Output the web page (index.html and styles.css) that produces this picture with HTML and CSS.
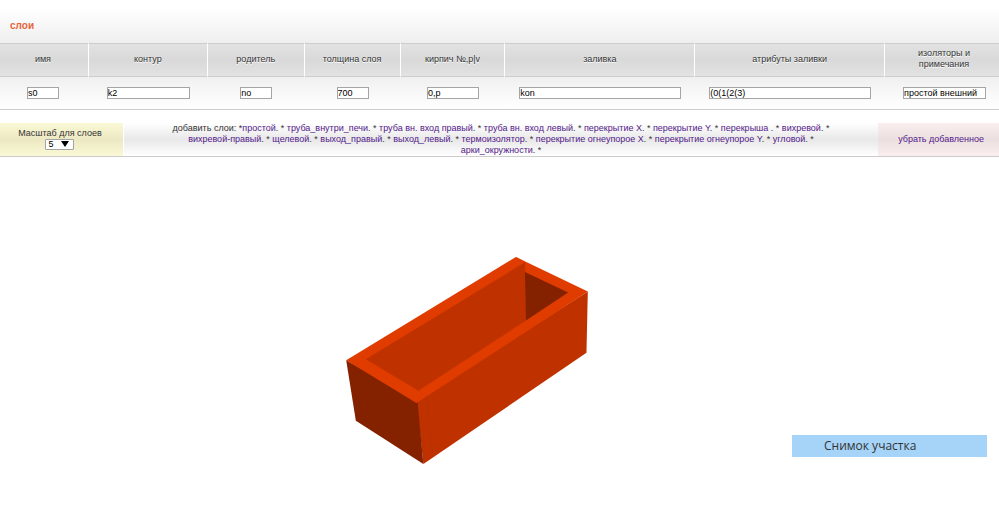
FILE: index.html
```html
<!DOCTYPE html>
<html lang="ru">
<head>
  <meta charset="UTF-8">
  <meta name="viewport" content="width=device-width, initial-scale=1.0">
  <title>слои</title>
  <link rel="stylesheet" href="styles.css">
</head>
<body>
  <h1 class="title">слои</h1>

  <!-- layer parameters -->
  <table class="layers">
    <colgroup>
      <col class="col-name">
      <col class="col-contour">
      <col class="col-parent">
      <col class="col-thick">
      <col class="col-brick">
      <col class="col-fill">
      <col class="col-fill">
      <col>
    </colgroup>
    <thead>
      <tr>
        <th id="h-name">имя</th>
        <th id="h-contour">контур</th>
        <th id="h-parent">родитель</th>
        <th id="h-thick">толщина слоя</th>
        <th id="h-brick">кирпич №,p|v</th>
        <th id="h-fill">заливка</th>
        <th id="h-attr">атрибуты заливки</th>
        <th id="h-notes">изоляторы и примечания</th>
      </tr>
    </thead>
    <tbody>
      <tr>
        <td><input type="text" class="w-small" aria-labelledby="h-name" value="s0"></td>
        <td><input type="text" class="w-medium" aria-labelledby="h-contour" value="k2"></td>
        <td><input type="text" class="w-small" aria-labelledby="h-parent" value="no"></td>
        <td><input type="text" class="w-small" aria-labelledby="h-thick" value="700"></td>
        <td><input type="text" class="w-brick" aria-labelledby="h-brick" value="0,p"></td>
        <td><input type="text" class="w-large" aria-labelledby="h-fill" value="kon"></td>
        <td><input type="text" class="w-large" aria-labelledby="h-attr" value="(0(1(2(3)"></td>
        <td><input type="text" class="w-medium" aria-labelledby="h-notes" value="простой внешний"></td>
      </tr>
    </tbody>
  </table>

  <div class="tools">
    <div class="scale">
      <label for="scale">Масштаб для слоев</label>
      <span class="select-box">
        <select id="scale">
          <option>1</option>
          <option selected>5</option>
          <option>10</option>
        </select>
      </span>
    </div>
    <div class="add">
      добавить слои: *<a href="#">простой</a>. *
      <a href="#">труба_внутри_печи</a>. *
      <a href="#">труба вн. вход правый</a>. *
      <a href="#">труба вн. вход левый</a>. *
      <a href="#">перекрытие X</a>. *
      <a href="#">перекрытие Y</a>. *
      <a href="#">перекрыша </a>. *
      <a href="#">вихревой</a>. *
      <a href="#">вихревой-правый</a>. *
      <a href="#">щелевой</a>. *
      <a href="#">выход_правый</a>. *
      <a href="#">выход_левый</a>. *
      <a href="#">термоизолятор</a>. *
      <a href="#">перекрытие огнеупорое X</a>. *
      <a href="#">перекрытие огнеупорое Y</a>. *
      <a href="#">угловой</a>. *
      <a href="#">арки_окружности</a>. *
    </div>
    <div class="remove"><a href="#">убрать добавленное</a></div>
  </div>

  <!-- 3D view of the brickwork -->
  <div class="scene">
    <svg class="box" viewBox="48 50 726 622" role="img" aria-label="3D модель">
      <polygon fill="#bf3200" points="259,480 774,154 770,338 280,672"/>
      <polygon fill="#842200" points="48,360 262,480 280,672 77,542"/>
      <polygon fill="#e03c00" points="48,360 558,50 774,154 259,489"/>
      <polygon fill="#bf3200" points="107,357 585,66 588,241 265,452"/>
      <polygon fill="#842200" points="585,95 715,157 588,241"/>
      <path d="M290 469L309 651" fill="none" stroke="#b02e00" stroke-width="1"/>
      <path d="M92 348L107 357M265 452L290 469M558 50L585 66V95" fill="none" stroke="#cc3700" stroke-width="1"/>
    </svg>
    <button type="button" class="snapshot">Снимок участка</button>
  </div>
</body>
</html>
```

FILE: styles.css
```css
* {
  box-sizing: border-box;
}

body {
  margin: 0;
  background: #fff;
  color: #333;
  font: 9px/11px "Liberation Sans", Arial, sans-serif;
}

a {
  color: #551a8b;
  text-decoration: none;
}

.title {
  margin: 0;
  padding: 20px 10px 12px;
  font-size: 10px;
  line-height: 11px;
  color: #e8643c;
  background: linear-gradient(#fff 20%, #eee);
}

/* Layers table */
.layers {
  width: 100%;
  table-layout: fixed;
  border-collapse: separate;
  border-spacing: 0;
}

.col-name { width: 8.9%; }
.col-contour { width: 11.9%; }
.col-parent { width: 9.7%; }
.col-thick { width: 9.6%; }
.col-brick { width: 10.5%; }
.col-fill { width: 19%; }

.layers th {
  height: 34px;
  padding: 0 20px 2px;
  font-weight: normal;
  text-shadow: 0 1px 0 #fff;
  background: linear-gradient(#e2e2e2, #d9d9d9 50%, #e2e2e2);
  border-top: 1px solid #ccc;
  border-bottom: 1px solid #ccc;
  border-right: 1px solid #fff;
}

.layers th:nth-child(4),
.layers th:nth-child(5) {
  padding: 0 0 2px;
}

.layers th:first-child {
  padding-right: 22px;
}

.layers th:last-child {
  padding-left: 24px;
  border-right: 0;
}

.layers td {
  height: 33px;
  padding: 0;
  text-align: center;
  background: linear-gradient(#f0f0f0, #fff);
  border-bottom: 1px solid #ccc;
}

.layers td:first-child {
  padding-right: 3px;
}

.layers td:last-child {
  padding-left: 5px;
}

.layers input {
  display: block;
  height: 12px;
  margin: 0 auto;
  padding: 0;
  font: inherit;
  color: #000;
  background: #fff;
  border: 1px solid #a5a5a5;
}

.w-small { width: 32px; }
.w-brick { width: 52px; }
.w-medium { width: 83px; }
.w-large { width: 162px; }

/* Toolbar under the table */
.tools {
  display: flex;
  margin-top: 13px;
  text-align: center;
  background: linear-gradient(#fff, #e8e8e8 50%, #fff);
  border-bottom: 1px solid #ccc;
}

.scale {
  display: flex;
  flex-direction: column;
  align-items: center;
  justify-content: center;
  width: 12.4%;
  padding: 0 3px 2px 0;
  background: linear-gradient(#fbf9d5, #ece8c4 50%, #fbf9d5);
  border-right: 1px solid #fff;
}

.select-box {
  position: relative;
}

.select-box::after {
  content: "";
  position: absolute;
  top: 2px;
  right: 5px;
  border: 4px solid transparent;
  border-top: 6px solid #000;
  border-bottom: 0;
  pointer-events: none;
}

.scale select {
  display: block;
  width: 29px;
  height: 11px;
  padding: 0 2px;
  font: inherit;
  line-height: 9px;
  color: #000;
  background: #fff;
  border: 1px solid #a5a5a5;
  border-radius: 1px;
  appearance: none;
}

.add {
  flex: 1;
  padding: 0 32px;
}

.remove {
  display: flex;
  align-items: center;
  justify-content: center;
  width: 12.1%;
  padding-left: 5px;
  background: linear-gradient(#fbeeee, #ebdfdf 50%, #fbeeee);
}

/* Model view */
.scene {
  display: flex;
  align-items: flex-end;
  padding: 100px 12px 0 34.6%;
}

.box {
  width: 242px;
  height: 207px;
}

.snapshot {
  width: 195px;
  height: 22px;
  margin: 0 0 7px auto;
  padding: 0 0 0 32px;
  text-align: left;
  font: 12px/22px "Open Sans", "Noto Sans", sans-serif;
  color: #333;
  background: #a6d3f8;
  border: 0;
}
```
